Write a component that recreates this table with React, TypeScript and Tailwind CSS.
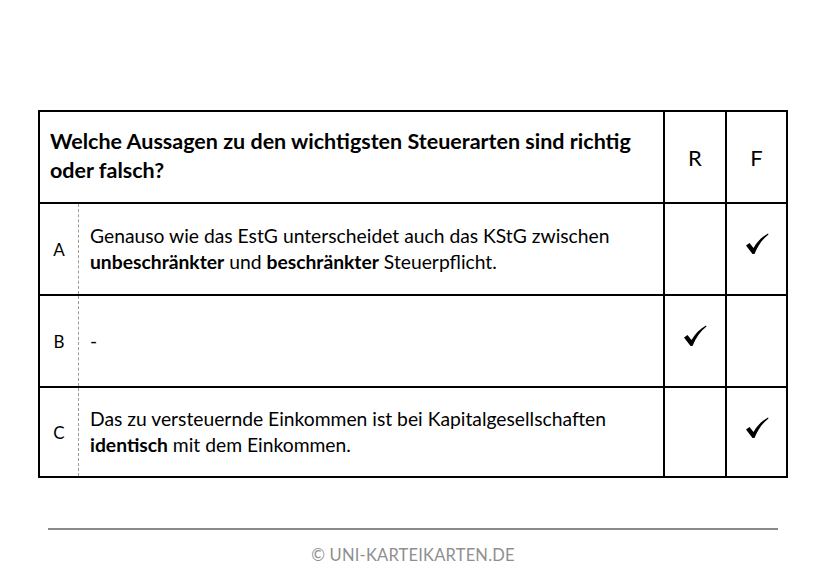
import React from "react";

const font = { fontFamily: "Lato, 'Open Sans', sans-serif" };

function Check() {
  return (
    <svg width="24" height="22" viewBox="0 0 24 22" className="block">
      <path
        d="M1 12.5 L4.5 10 L8.5 15 C12 9 16.5 4 23 0.5 L23.5 1.5 C17.5 6 13 12.5 9.5 21 L7.5 21 Z"
        fill="#000"
      />
    </svg>
  );
}

type Row = {
  letter: string;
  text: React.ReactNode;
  r: boolean;
  f: boolean;
  h: string;
};

const rows: Row[] = [
  {
    letter: "A",
    text: (
      <>
        Genauso wie das EstG unterscheidet auch das KStG zwischen
        <br />
        <b>unbeschränkter</b> und <b>beschränkter</b> Steuerpflicht.
      </>
    ),
    r: false,
    f: true,
    h: "h-[92px]",
  },
  { letter: "B", text: "-", r: true, f: false, h: "h-[92px]" },
  {
    letter: "C",
    text: (
      <>
        Das zu versteuernde Einkommen ist bei Kapitalgesellschaften
        <br />
        <b>identisch</b> mit dem Einkommen.
      </>
    ),
    r: false,
    f: true,
    h: "h-[90px]",
  },
];

export default function App() {
  return (
    <div className="w-[826px] h-[582px] bg-white text-black" style={font}>
      <div className="pt-[110px] pl-[38px]">
        <div className="w-[750px] border-2 border-black">
          <div className="flex h-[90px]">
            <div className="w-[623px] flex items-center pl-[10px] pb-[2px] font-bold text-[21.5px] leading-[29px]">
              <div>
                Welche Aussagen zu den wichtigsten Steuerarten sind richtig
                <br />
                oder falsch?
              </div>
            </div>
            <div className="w-[62px] border-l-2 border-black flex items-center justify-center text-[22px]">
              R
            </div>
            <div className="w-[61px] border-l-2 border-black flex items-center justify-center text-[22px]">
              F
            </div>
          </div>
          {rows.map((row) => (
            <div key={row.letter} className={`flex border-t-2 border-black ${row.h}`}>
              <div className="w-[623px] flex">
                <div className="w-[39px] flex items-center justify-center text-[17px] pt-[2px] border-r border-dashed border-[#9a9a9a]">
                  {row.letter}
                </div>
                <div className="flex-1 flex items-center pl-[11px] pb-[1px] text-[19.3px] leading-[26px]">
                  <div>{row.text}</div>
                </div>
              </div>
              <div className="w-[62px] border-l-2 border-black flex justify-center pt-[29px]">
                {row.r && <Check />}
              </div>
              <div className="w-[61px] border-l-2 border-black flex justify-center pt-[29px]">
                {row.f && <Check />}
              </div>
            </div>
          ))}
        </div>
      </div>
      <div className="mt-[50px] mx-[48px] h-[2px] bg-[#8a8a8a]" />
      <div className="text-center text-[#8f8f8f] text-[16.5px] mt-[13px] tracking-[0.2px]">
        © UNI-KARTEIKARTEN.DE
      </div>
    </div>
  );
}
